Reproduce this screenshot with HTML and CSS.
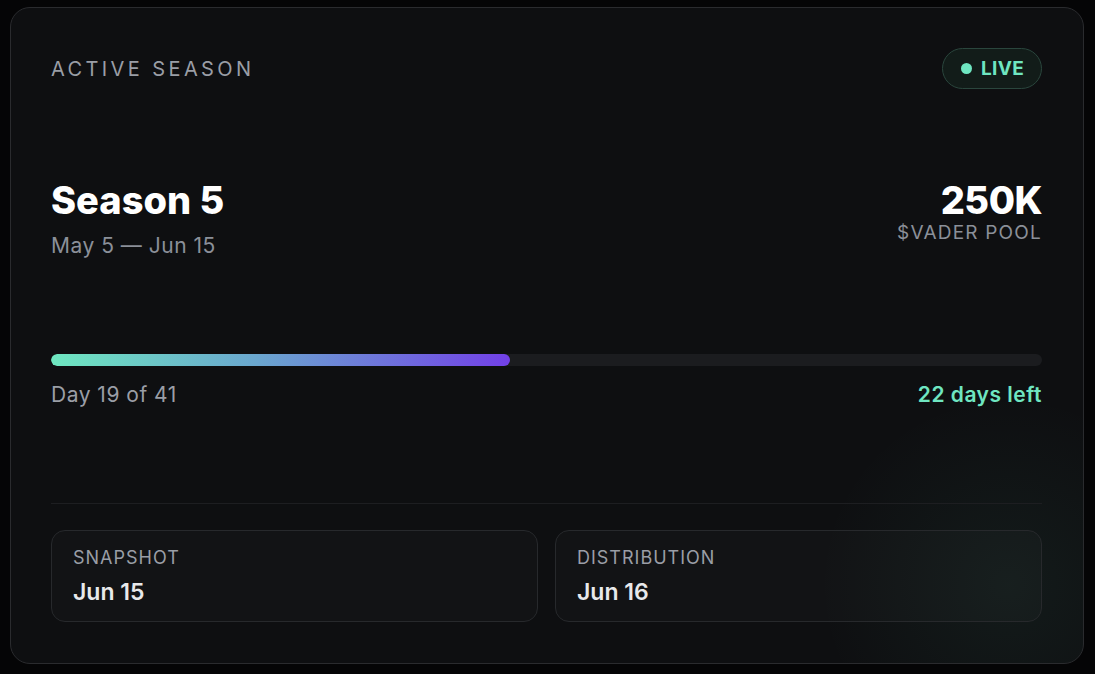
FILE: index.html
```html
<!DOCTYPE html>
<html lang="en">
<head>
<meta charset="utf-8">
<title>Active Season</title>
<link rel="stylesheet" href="styles.css">
</head>
<body>
<main class="page">
  <section class="card">
    <header class="card-head">
      <span class="eyebrow">ACTIVE SEASON</span>
      <span class="badge"><span class="dot"></span>LIVE</span>
    </header>

    <div class="summary">
      <div class="summary-left">
        <h1 class="title">Season 5</h1>
        <div class="dates">May 5 — Jun 15</div>
      </div>
      <div class="summary-right">
        <div class="pool">250K</div>
        <div class="pool-label">$VADER POOL</div>
      </div>
    </div>

    <div class="progress">
      <div class="track"><div class="fill" style="width: 46.34%"></div></div>
      <div class="progress-meta">
        <span class="day">Day 19 of 41</span>
        <span class="left">22 days left</span>
      </div>
    </div>

    <div class="divider"></div>

    <div class="boxes">
      <div class="box">
        <div class="box-label">SNAPSHOT</div>
        <div class="box-value">Jun 15</div>
      </div>
      <div class="box">
        <div class="box-label">DISTRIBUTION</div>
        <div class="box-value">Jun 16</div>
      </div>
    </div>
  </section>
</main>
</body>
</html>
```

FILE: styles.css
```css
* { box-sizing: border-box; }

html, body {
  margin: 0;
  padding: 0;
  background: #050506;
  font-family: Inter, "Noto Sans", "Liberation Sans", sans-serif;
}

.page {
  padding: 7px 11px 10px 10px;
}

.card {
  height: 657px;
  border: 1px solid #2a2b2e;
  border-radius: 20px;
  background:
    radial-gradient(circle at 93% 88%, rgba(110, 231, 190, 0.055) 0, rgba(110, 231, 190, 0) 190px),
    #0e0f11;
  padding: 40px 41px 41px 40px;
  display: flex;
  flex-direction: column;
}

.card-head {
  display: flex;
  justify-content: space-between;
  align-items: center;
  height: 41px;
}

.eyebrow {
  font-size: 20px;
  letter-spacing: 3.4px;
  color: #9a9ea6;
  font-weight: 400;
}

.badge {
  display: flex;
  align-items: center;
  gap: 9px;
  height: 41px;
  padding: 0 17px 0 18px;
  border: 1.5px solid #2a463d;
  border-radius: 999px;
  background: #121c19;
  color: #6fe6c1;
  font-weight: 700;
  font-size: 19px;
  letter-spacing: 0.3px;
}

.dot {
  width: 11px;
  height: 11px;
  border-radius: 50%;
  background: #6fe6c1;
}

.summary {
  margin-top: 89px;
  display: flex;
  justify-content: space-between;
  align-items: flex-start;
}

.title {
  margin: 0;
  font-size: 38px;
  line-height: 44px;
  font-weight: 800;
  color: #ffffff;
  letter-spacing: 0;
}

.dates {
  margin-top: 10px;
  font-size: 21px;
  line-height: 28px;
  letter-spacing: 0.5px;
  color: #8b9099;
}

.summary-right {
  text-align: right;
}

.pool {
  font-size: 38px;
  line-height: 44px;
  font-weight: 800;
  color: #ffffff;
  letter-spacing: -0.5px;
}

.pool-label {
  margin-top: -2px;
  font-size: 19px;
  line-height: 25px;
  letter-spacing: 1.2px;
  color: #8b9099;
}

.progress {
  margin-top: 94px;
}

.track {
  height: 12px;
  border-radius: 999px;
  background: #1b1c1f;
  overflow: hidden;
}

.fill {
  height: 100%;
  border-radius: 999px;
  background: linear-gradient(90deg, #6ee7c0 0%, #6aa6cf 45%, #7240e8 100%);
}

.progress-meta {
  margin-top: 15px;
  display: flex;
  justify-content: space-between;
  font-size: 21px;
  line-height: 28px;
  letter-spacing: 0.5px;
}

.day {
  color: #9a9ea6;
}

.left {
  color: #6fe6c1;
  font-weight: 600;
}

.divider {
  margin-top: 94px;
  height: 1px;
  background: #1d1e21;
}

.boxes {
  margin-top: 26px;
  display: grid;
  grid-template-columns: 1fr 1fr;
  gap: 17px;
}

.box {
  height: 92px;
  border: 1px solid #27292c;
  border-radius: 14px;
  background: rgba(255, 255, 255, 0.02);
  padding: 14px 21px;
}

.box-label {
  font-size: 18px;
  line-height: 25px;
  letter-spacing: 1px;
  color: #9a9ea6;
}

.box-value {
  margin-top: 7px;
  font-size: 23px;
  line-height: 30px;
  font-weight: 600;
  color: #e8e9eb;
}
```
